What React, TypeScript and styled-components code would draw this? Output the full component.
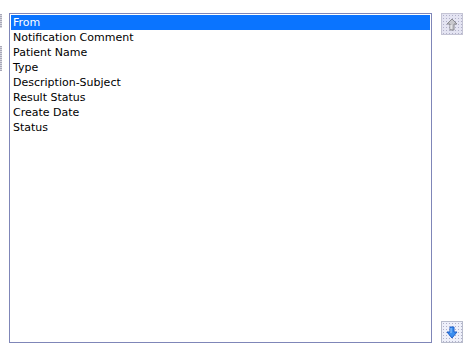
import styled, { createGlobalStyle } from "styled-components";

const fields = [
  "From",
  "Notification Comment",
  "Patient Name",
  "Type",
  "Description-Subject",
  "Result Status",
  "Create Date",
  "Status",
];

const GlobalStyle = createGlobalStyle`
  html, body {
    margin: 0;
    padding: 0;
    background: #ffffff;
  }
  body {
    font-family: "DejaVu Sans", Tahoma, sans-serif;
    font-size: 11px;
  }
`;

const Page = styled.div`
  display: flex;
  align-items: flex-start;
  width: 471px;
  height: 348px;
  padding-top: 13px;
  box-sizing: border-box;
`;

const EdgeStub = styled.div`
  display: flex;
  flex-direction: column;
  gap: 18px;
  width: 2px;
  padding-top: 1px;
  margin-right: 7px;
`;

const StubPiece = styled.div<{ $h: number }>`
  height: ${(p) => p.$h}px;
  background: repeating-linear-gradient(
    to bottom,
    #a8a8b8 0px,
    #a8a8b8 1px,
    #d8d8e0 1px,
    #d8d8e0 2px
  );
`;

const ListBox = styled.div`
  width: 423px;
  height: 330px;
  box-sizing: border-box;
  border: 1px solid #7f86b8;
  padding: 1px;
  background: #ffffff;
`;

const Item = styled.div<{ $selected?: boolean }>`
  height: 15px;
  line-height: 15px;
  padding-left: 2px;
  white-space: nowrap;
  color: ${(p) => (p.$selected ? "#ffffff" : "#000000")};
  background: ${(p) => (p.$selected ? "#0a74ff" : "transparent")};
`;

const ButtonColumn = styled.div`
  display: flex;
  flex-direction: column;
  justify-content: space-between;
  height: 330px;
  margin-left: 9px;
`;

const ArrowButton = styled.div<{ $disabled?: boolean }>`
  width: 22px;
  height: 22px;
  box-sizing: border-box;
  border: 1px solid ${(p) => (p.$disabled ? "#c4c4d4" : "#b8bccc")};
  background-color: ${(p) => (p.$disabled ? "#e4e4f2" : "#eef0fa")};
  background-image: radial-gradient(#b0b0c8 0.6px, transparent 0.8px);
  background-size: 3px 3px;
  display: flex;
  align-items: center;
  justify-content: center;
`;

function UpArrow() {
  return (
    <svg width="12" height="13" viewBox="0 0 12 13">
      <path d="M6 1 L11 6 L8 6 L8 12 L4 12 L4 6 L1 6 Z" fill="#c8c8cc" stroke="#8a8a90" strokeWidth="1" />
      <path d="M5 7 L5 11" stroke="#ffffff" strokeWidth="1" />
    </svg>
  );
}

function DownArrow() {
  return (
    <svg width="12" height="13" viewBox="0 0 12 13">
      <path d="M4 1 L8 1 L8 6 L11 6 L6 12 L1 6 L4 6 Z" fill="#3a8ef0" stroke="#1c5fc8" strokeWidth="1" />
      <path d="M5 2 L5 7" stroke="#9fd0ff" strokeWidth="1" />
    </svg>
  );
}

export default function App() {
  return (
    <>
      <GlobalStyle />
      <Page>
        <EdgeStub>
          <StubPiece $h={14} />
          <StubPiece $h={25} />
        </EdgeStub>
        <ListBox>
          {fields.map((f, i) => (
            <Item key={f} $selected={i === 0}>
              {f}
            </Item>
          ))}
        </ListBox>
        <ButtonColumn>
          <ArrowButton $disabled>
            <UpArrow />
          </ArrowButton>
          <ArrowButton>
            <DownArrow />
          </ArrowButton>
        </ButtonColumn>
      </Page>
    </>
  );
}
